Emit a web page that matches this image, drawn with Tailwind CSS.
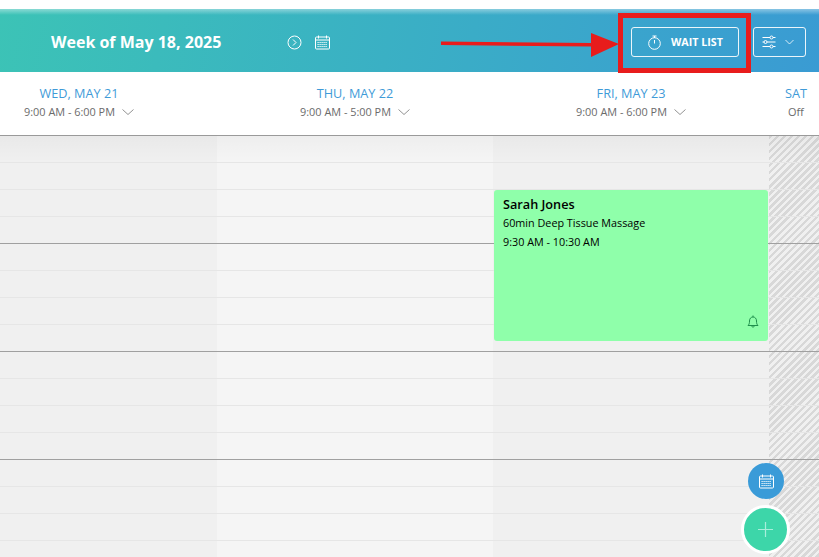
<!DOCTYPE html>
<html>
<head>
<meta charset="UTF-8">
  <title>Calendar</title>
  <script src="https://cdn.jsdelivr.net/npm/@tailwindcss/browser@4"></script>
</head>
<body class="relative h-[557px] w-[819px] overflow-hidden bg-white font-['Open_Sans',sans-serif]">
  <div class="h-[9px] bg-white"></div>

  <!-- Top bar -->
  <header class="relative flex h-[63px] items-center bg-[linear-gradient(100deg,#3cc3b6_0%,#3ab3c2_40%,#3a9bd3_100%)] pt-[3px] text-white">
    <div class="absolute inset-x-0 top-0 h-[6px] bg-gradient-to-b from-white/40 to-transparent"></div>
    <h1 class="ml-[51px] w-[236px] text-[16px] leading-[22px] font-bold whitespace-nowrap">Week of May 18, 2025</h1>
    <svg class="h-[15px] w-[15px]" viewBox="0 0 15 15" fill="none" stroke="white" stroke-width="1">
      <circle cx="7.5" cy="7.5" r="6.5"/><path d="M6 4.5l3 3-3 3"/>
    </svg>
    <svg class="ml-[13px] h-[15px] w-[15px]" viewBox="0 0 15 15" fill="none" stroke="white" stroke-width="1">
      <rect x="0.5" y="2" width="14" height="12" rx="1"/><path d="M3.5 0.5v3M11.5 0.5v3M0.5 5h14"/>
      <path d="M2.5 7.5h10M2.5 9.5h10M2.5 11.5h10" stroke-dasharray="1.2 .8"/>
    </svg>
    <button class="ml-auto flex h-[30px] w-[108px] items-center rounded-[3px] border border-white/90 pl-[15px] text-[10.7px] font-bold">
      <svg class="mr-[9px] h-[15px] w-[15px]" viewBox="0 0 15 15" fill="none" stroke="white" stroke-width="1">
        <circle cx="7.5" cy="8.5" r="5.8"/><path d="M5.5 1h4M7.5 1v2M7.5 5v3.5"/>
      </svg>
      WAIT LIST
    </button>
    <button class="mr-[13px] ml-[14px] flex h-[30px] w-[53px] items-center rounded-[3px] border border-white/90 pl-[8px]">
      <svg class="h-[14px] w-[14px]" viewBox="0 0 14 14" fill="none" stroke="white" stroke-width="1">
        <path d="M0.5 2.5h13M0.5 7h13M0.5 11.5h13"/>
        <circle cx="9.5" cy="2.5" r="1.5" fill="#3a9bd3"/><circle cx="3.5" cy="7" r="1.5" fill="#3a9bd3"/><circle cx="9.5" cy="11.5" r="1.5" fill="#3a9bd3"/>
      </svg>
      <svg class="ml-[9px] h-[6px] w-[9px]" viewBox="0 0 9 6" fill="none" stroke="white" stroke-width="0.8"><path d="M0.5 1l4 4 4-4"/></svg>
    </button>
  </header>

  <!-- Day headers -->
  <div class="flex h-[63px] overflow-hidden bg-white text-center">
    <div class="ml-[-59px] w-[276px] shrink-0 pt-[12px]">
      <div class="text-[12.7px] leading-[18px] font-medium text-[#3f9bd8]">WED, MAY 21</div>
      <div class="mt-[1px] flex items-center justify-center text-[10.9px] leading-[18px] text-[#6b6b6b]">9:00 AM - 6:00 PM
        <svg class="ml-[7px] h-[6px] w-[12px]" viewBox="0 0 12 6" fill="none" stroke="#777" stroke-width="0.8"><path d="M0.5 0.5l5.5 5 5.5-5"/></svg>
      </div>
    </div>
    <div class="w-[276px] shrink-0 pt-[12px]">
      <div class="text-[12.7px] leading-[18px] font-medium text-[#3f9bd8]">THU, MAY 22</div>
      <div class="mt-[1px] flex items-center justify-center text-[10.9px] leading-[18px] text-[#6b6b6b]">9:00 AM - 5:00 PM
        <svg class="ml-[7px] h-[6px] w-[12px]" viewBox="0 0 12 6" fill="none" stroke="#777" stroke-width="0.8"><path d="M0.5 0.5l5.5 5 5.5-5"/></svg>
      </div>
    </div>
    <div class="w-[276px] shrink-0 pt-[12px]">
      <div class="text-[12.7px] leading-[18px] font-medium text-[#3f9bd8]">FRI, MAY 23</div>
      <div class="mt-[1px] flex items-center justify-center text-[10.9px] leading-[18px] text-[#6b6b6b]">9:00 AM - 6:00 PM
        <svg class="ml-[7px] h-[6px] w-[12px]" viewBox="0 0 12 6" fill="none" stroke="#777" stroke-width="0.8"><path d="M0.5 0.5l5.5 5 5.5-5"/></svg>
      </div>
    </div>
    <div class="w-[54px] shrink-0 pt-[12px]">
      <div class="text-[12.7px] leading-[18px] font-medium text-[#3f9bd8]">SAT</div>
      <div class="mt-[1px] text-[10.9px] leading-[18px] text-[#6b6b6b]">Off</div>
    </div>
  </div>

  <!-- Calendar grid -->
  <div class="relative h-[422px] border-t border-[#9a9a9a]">
    <div class="flex h-full">
      <div class="w-[217px] bg-[#f0f0f0]"></div>
      <div class="w-[276px] bg-[#f5f5f5]"></div>
      <div class="w-[276px] bg-[#f0f0f0]"></div>
      <div class="flex-1 bg-[repeating-linear-gradient(135deg,#d8d8d8_0,#d8d8d8_2.5px,#f0f0f0_2.5px,#f0f0f0_5px)]"></div>
    </div>

    <div class="absolute inset-0 flex flex-col">
      <div class="h-[27px] border-b border-[#e6e6e6] bg-gradient-to-b from-black/[0.03] to-transparent"></div>
      <div class="h-[27px] border-b border-[#e6e6e6]"></div>
      <div class="h-[27px] border-b border-[#e6e6e6]"></div>
      <div class="h-[27px] border-b border-[#a0a0a0]"></div>
      <div class="h-[27px] border-b border-[#e6e6e6]"></div>
      <div class="h-[27px] border-b border-[#e6e6e6]"></div>
      <div class="h-[27px] border-b border-[#e6e6e6]"></div>
      <div class="h-[27px] border-b border-[#a0a0a0]"></div>
      <div class="h-[27px] border-b border-[#e6e6e6]"></div>
      <div class="h-[27px] border-b border-[#e6e6e6]"></div>
      <div class="h-[27px] border-b border-[#e6e6e6]"></div>
      <div class="h-[27px] border-b border-[#a0a0a0]"></div>
      <div class="h-[27px] border-b border-[#e6e6e6]"></div>
      <div class="h-[27px] border-b border-[#e6e6e6]"></div>
      <div class="h-[27px] border-b border-[#e6e6e6]"></div>
    </div>

    <!-- Appointment -->
    <div class="absolute top-[54px] left-[494px] h-[151px] w-[274px] rounded-[3px] bg-[#8fffaa] px-[9px] pt-[6px] text-black">
      <div class="text-[12.7px] leading-[17px] font-[560]">Sarah Jones</div>
      <div class="text-[10.8px] leading-[19px]">60min Deep Tissue Massage</div>
      <div class="text-[10.8px] leading-[19px]">9:30 AM - 10:30 AM</div>
      <svg class="absolute right-[9px] bottom-[13px] h-[13px] w-[12px]" viewBox="0 0 12 13" fill="none" stroke="#1f8f4c" stroke-width="1">
        <path d="M1 10.5h10c-1-1-1.5-2-1.5-4.5S8 2 6 2 2.500 3.500 2.500 6 2 9.500 1 10.500zM6 .5V2M4.500 10.500c0 2 3 2 3 0"/>
      </svg>
    </div>
  </div>

  <!-- Floating buttons -->
  <button class="absolute top-[463px] left-[748px] flex h-[36px] w-[36px] items-center justify-center rounded-full bg-[#3a9bd8]">
    <svg class="h-[15px] w-[15px]" viewBox="0 0 15 15" fill="none" stroke="white" stroke-width="1">
      <rect x="0.5" y="2" width="14" height="12" rx="1"/><path d="M3.500 0.500v3M11.500 0.500v3M0.500 5h14"/>
      <path d="M2.500 7.500h10M2.500 9.500h10M2.500 11.500h10" stroke-dasharray="1.200 .8"/>
    </svg>
  </button>
  <button class="absolute top-[505px] left-[741px] flex h-[49px] w-[49px] items-center justify-center rounded-full border-[3px] border-white bg-[#3dd6a9]">
    <svg class="h-[15px] w-[15px]" viewBox="0 0 15 15" stroke="#a8eedb" stroke-width="1.200"><path d="M7.500 0v15M0 7.500h15"/></svg>
  </button>

  <!-- Red annotation -->
  <div class="absolute top-[13px] left-[618px] h-[60px] w-[133px] border-[5px] border-[#e81c1c]"></div>
  <svg class="absolute top-[30px] left-[440px] h-[30px] w-[180px]" viewBox="0 0 180 30" fill="#e81c1c">
    <path d="M1 11.500l150 1.500V3l28 11-28 13V16.500L1 15z"/>
  </svg>
</body>
</html>
